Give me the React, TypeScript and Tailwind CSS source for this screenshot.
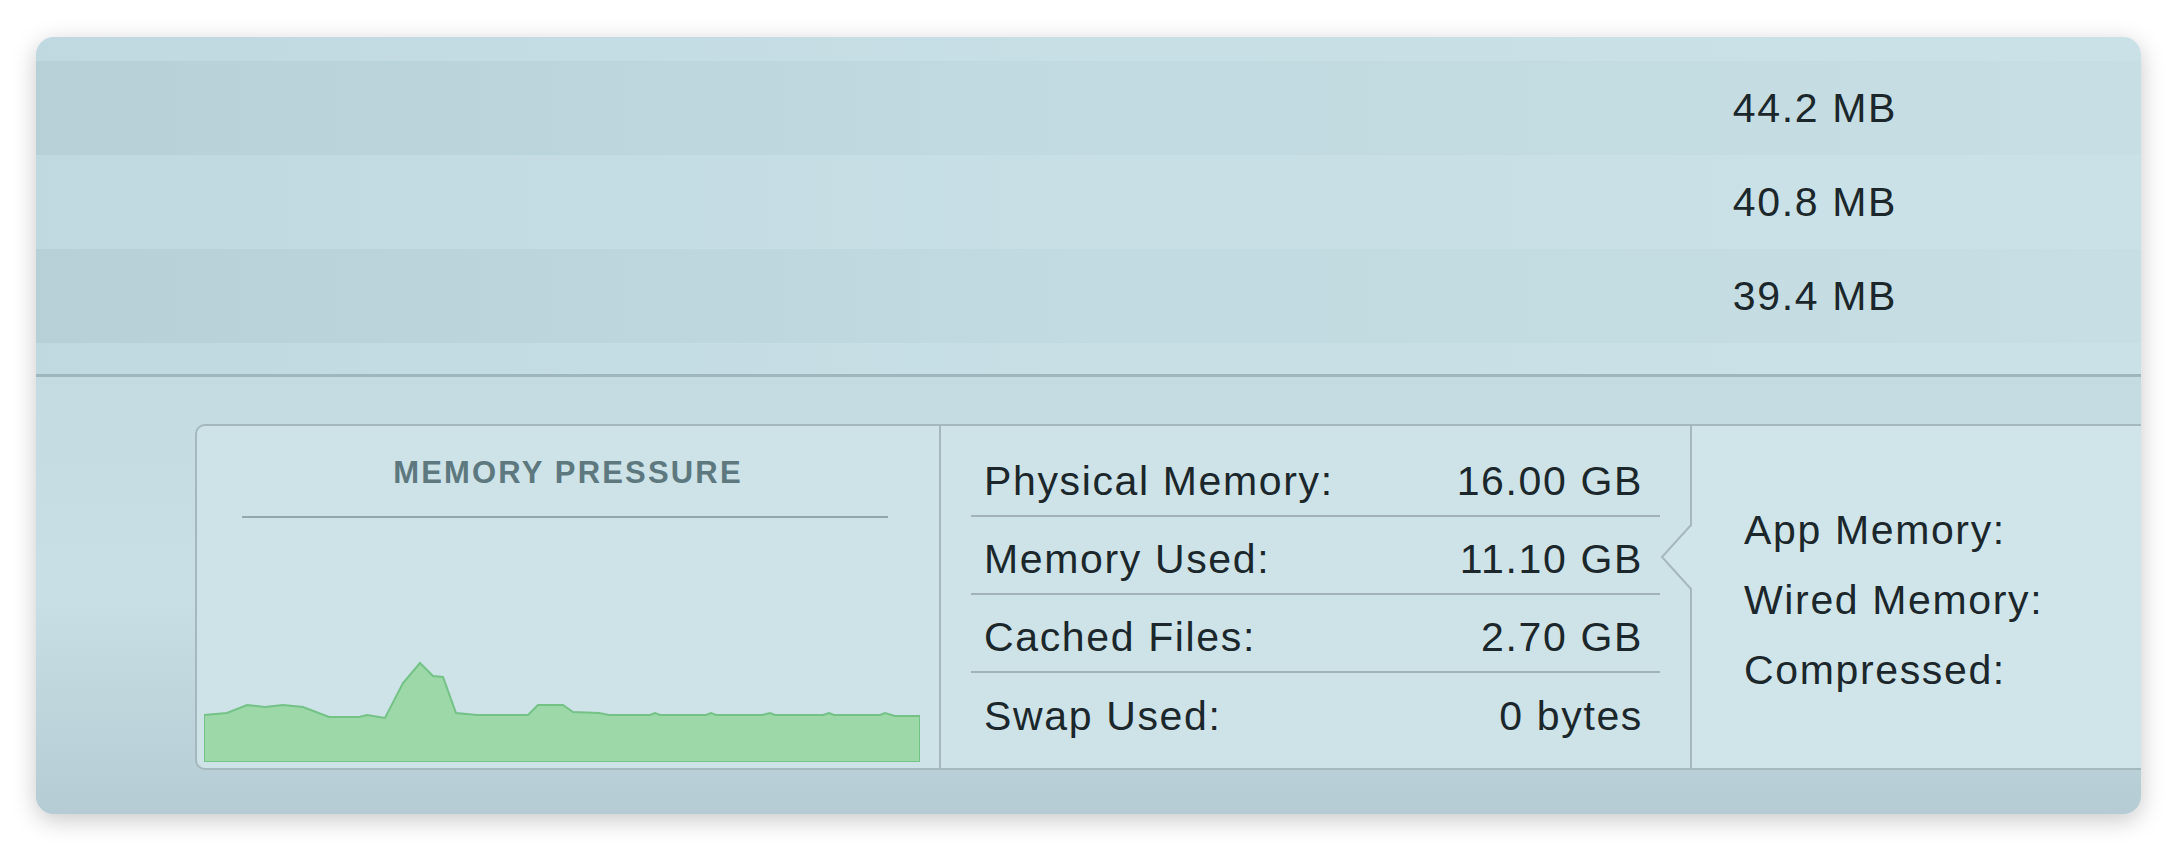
const topRows = [
  { value: "44.2 MB", bg: "bg-[#bdd6dd]" },
  { value: "40.8 MB", bg: "bg-[#c6dee4]" },
  { value: "39.4 MB", bg: "bg-[#bed7de]" },
];

const stats = [
  { label: "Physical Memory:", value: "16.00 GB" },
  { label: "Memory Used:", value: "11.10 GB" },
  { label: "Cached Files:", value: "2.70 GB" },
  { label: "Swap Used:", value: "0 bytes" },
];

const breakdown = ["App Memory:", "Wired Memory:", "Compressed:"];

// pressure graph outline, in svg units (716 x 107)
const graph =
  "0,60 23,58 43,50 61,52 79,50 99,52 125,62 155,62 163,60 181,63 199,28 216,8 229,21 239,22 252,58 273,60 324,60 334,50 359,50 369,57 395,58 405,60 446,60 451,58 456,60 502,60 507,58 512,60 558,60 566,58 571,60 619,60 625,58 630,60 676,60 681,58 691,61 716,61";

function PressureGraph() {
  return (
    <svg width="716" height="107" viewBox="0 0 716 107" className="block">
      <polygon points={`${graph} 716,107 0,107`} fill="#9cd8a8" stroke="#74c286" strokeWidth="2" />
    </svg>
  );
}

export default function App() {
  return (
    <div className="min-h-screen bg-white pt-[37px] pl-[36px] pr-[37px] font-['Liberation_Sans',Arial,sans-serif] text-[#1b272b]">
      <div className="h-[777px] rounded-[18px] overflow-hidden flex flex-col bg-gradient-to-r from-[#b8d1d9] via-[#c4dce2] to-[#c9e0e6] shadow-[0_6px_24px_rgba(0,0,0,0.22)]">
        <div className="flex flex-col">
          <div className="h-[24px] bg-[#cde4ea]/40" />
          {topRows.map((r, i) => (
            <div
              key={r.value}
              className={`h-[94px] flex items-center justify-end pr-[244px] ${
                i === 1 ? "bg-[#cde4ea]/40" : "bg-[#b5ced6]/10"
              }`}
            >
              <span className="text-[41px] tracking-[0.04em] leading-none">{r.value}</span>
            </div>
          ))}
          <div className="h-[31px] bg-[#cde4ea]/40" />
        </div>
        <div className="h-[3px] bg-[#9fb6bd]" />

        <div className="flex-1 flex flex-col bg-gradient-to-b from-[#c3dbe1] via-[#c8dfe5] to-[#b5ccd4]">
          <div className="pt-[47px] pl-[159px]">
            <div className="h-[346px] flex border-y-2 border-l-2 border-[#a4b8be] rounded-l-[10px] bg-[#cde3e8]">
              <div className="w-[742px] flex flex-col items-center pt-[27px]">
                <div className="text-[31px] font-semibold tracking-[0.07em] leading-[40px] text-[#5d787e]">
                  MEMORY PRESSURE
                </div>
                <div className="mt-[23px] ml-[-6px] w-[646px] h-[2px] bg-[#93a8ae]" />
                <div className="mt-auto mb-[6px] self-start ml-[7px]">
                  <PressureGraph />
                </div>
              </div>

              <div className="w-[751px] border-l-2 border-[#a4b8be] px-[30px] pt-[13px]">
                {stats.map((s, i) => (
                  <div
                    key={s.label}
                    className={`h-[78px] flex items-center justify-between pl-[13px] pr-[17px] pt-[9px] ${
                      i < stats.length - 1 ? "border-b-2 border-[#a1b3b8]" : ""
                    }`}
                  >
                    <span className="text-[41px] tracking-[0.04em] leading-none">{s.label}</span>
                    <span className="text-[41px] tracking-[0.04em] leading-none">{s.value}</span>
                  </div>
                ))}
              </div>

              <div className="relative flex-1 border-l-2 border-[#a4b8be] bg-[#d0e5ea] flex flex-col justify-center pl-[52px] pt-[6px]">
                <svg
                  width="34"
                  height="64"
                  viewBox="0 0 34 64"
                  className="absolute left-[-32px] top-[99px]"
                >
                  <polygon points="2,32 31,1 34,1 34,63 31,63" fill="#d0e5ea" />
                  <polyline points="31,0 2,32 31,64" fill="none" stroke="#a4b8be" strokeWidth="2" />
                </svg>
                {breakdown.map((b) => (
                  <div key={b} className="text-[41px] tracking-[0.04em] leading-[70px]">
                    {b}
                  </div>
                ))}
              </div>
            </div>
          </div>
        </div>
      </div>
    </div>
  );
}
